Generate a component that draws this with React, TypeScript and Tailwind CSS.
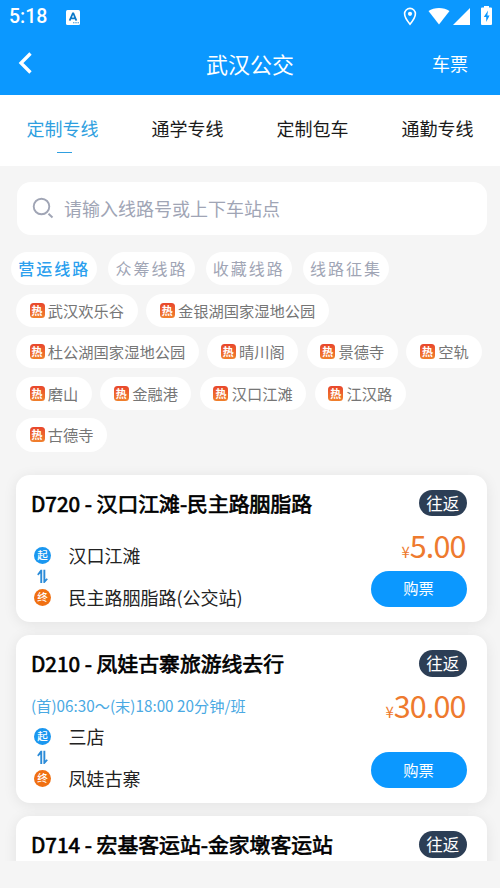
import clsx from "clsx";

const tabs = ["定制专线", "通学专线", "定制包车", "通勤专线"];
const filters = ["营运线路", "众筹线路", "收藏线路", "线路征集"];

const hotRows = [
  ["武汉欢乐谷", "金银湖国家湿地公园"],
  ["杜公湖国家湿地公园", "晴川阁", "景德寺", "空轨"],
  ["磨山", "金融港", "汉口江滩", "江汉路"],
  ["古德寺"],
];

type Trip = { time?: string; from: string; to: string; price: string };
type Line = { title: string; trip?: Trip };

const lines: Line[] = [
  { title: "D720 - 汉口江滩-民主路胭脂路", trip: { from: "汉口江滩", to: "民主路胭脂路(公交站)", price: "5.00" } },
  { title: "D210 - 凤娃古寨旅游线去行", trip: { time: "(首)06:30～(末)18:00 20分钟/班", from: "三店", to: "凤娃古寨", price: "30.00" } },
  { title: "D714 - 宏基客运站-金家墩客运站" },
];

function StatusBar() {
  return (
    <div className="flex h-[34px] items-center pl-[9px] pr-[8.5px] text-white">
      <span className="font-[Roboto] text-[19.5px] font-medium leading-none">5:18</span>
      <svg className="ml-[19px]" width="14" height="15" viewBox="0 0 14 15">
        <rect width="14" height="15" rx="1.5" fill="#fff" />
        <path d="M3.6 10.6 6.8 3.4h.6l3 7.2M4.8 8.4h4.600" fill="none" stroke="#0b78c8" strokeWidth="1.7" />
        <path d="M7.2 12.8h1.2M9.4 12.8h1.2M11.6 12.8h1.2" stroke="#0b78c8" strokeWidth="1.1" />
      </svg>
      <svg className="-mt-[2px] ml-auto" width="14" height="19" viewBox="0 0 14 19">
        <path d="M7 1.4a5.4 5.4 0 0 0-5.4 5.400C1.6 10.8 7 17.2 7 17.2s5.4-6.4 5.4-10.4A5.4 5.4 0 0 0 7 1.4Z" fill="none" stroke="#fff" strokeWidth="1.6" />
        <circle cx="7" cy="6.8" r="2.1" fill="#fff" />
      </svg>
      <svg className="-mt-[2px] ml-[11px]" width="22" height="18" viewBox="0 0 22 18">
        <path d="M.5 4C6 0 16 0 21.5 4L11 17.5Z" fill="#fff" />
      </svg>
      <svg className="-mt-[1px] ml-[3px]" width="17" height="17" viewBox="0 0 17 17">
        <path d="M17 0v17H0Z" fill="#fff" />
      </svg>
      <svg className="-mt-[3px] ml-[10.5px]" width="11" height="19" viewBox="0 0 11 19">
        <path d="M3 0h5v1.5h2a1 1 0 0 1 1 1V18a1 1 0 0 1-1 1H1a1 1 0 0 1-1-1V2.5a1 1 0 0 1 1-1h2Z" fill="#fff" />
        <path d="M7 4.5 2.8 11h2.4v5L8.6 9.5H6.3Z" fill="#0b98ff" />
      </svg>
    </div>
  );
}

function HotTag({ name }: { name: string }) {
  return (
    <div className="flex h-[33.4px] shrink-0 items-center rounded-full bg-white pl-[13.5px] pr-[13.4px]">
      <span className="flex size-[15px] items-center justify-center rounded-[3.5px] bg-linear-to-b from-[#e8452c] to-[#f0802c] text-[11px] font-bold leading-none text-white">热</span>
      <span className="ml-[3.3px] text-[15.28px] leading-none text-[#767676]">{name}</span>
    </div>
  );
}

function Stop({ mark, name, color }: { mark: string; name: string; color: string }) {
  return (
    <div className="flex h-[18px] items-center">
      <span className={clsx("flex size-[17px] items-center justify-center rounded-full text-[10.5px] font-medium leading-none text-white", color)}>{mark}</span>
      <span className="-mt-[1.5px] ml-[17.5px] text-[18px] leading-none text-[#222]">{name}</span>
    </div>
  );
}

function TripInfo({ trip }: { trip: Trip }) {
  return (
    <div className="flex flex-1 justify-between">
      <div className="flex flex-col pl-[3px]">
        {trip.time ? (
          <div className="-ml-[3px] mt-[20px] mb-[14.5px] h-[16px] text-[15.25px] leading-[16px] text-[#4aa9e3]">{trip.time}</div>
        ) : (
          <div className="h-[30px]" />
        )}
        <Stop mark="起" name={trip.from} color="bg-[#1a97f0]" />
        <svg className="my-[4.5px] ml-[3px]" width="12" height="15" viewBox="0 0 12 15">
          <path d="M.2 5.2 3.6.8H5.2V14H3.3V4.4L1.2 6.6ZM6.4.8H8.3V10.6L9.6 9.2 10.9 10.3 7.6 14H6.4Z" fill="#2b8bd8" />
        </svg>
        <Stop mark="终" name={trip.to} color="bg-[#f07012]" />
      </div>
      <div className="flex flex-col items-end">
        <div className="mr-[1px] mt-[12px] flex h-[32px] items-baseline leading-[32px] text-[#ee7a2e]">
          <span className="text-[15px]">¥</span>
          <span className="text-[30.5px] tracking-[-0.9px]">{trip.price}</span>
        </div>
        <button className={clsx("flex h-[36px] w-[96px] items-center justify-center rounded-full bg-[#0b98ff] pb-[1px] text-[15.3px] leading-none text-white", trip.time ? "mt-[31px]" : "mt-[10px]")}>购票</button>
      </div>
    </div>
  );
}

function LineCard({ line }: { line: Line }) {
  return (
    <div className={clsx("flex w-[471px] shrink-0 flex-col rounded-[14px] bg-white pl-[15.5px] pr-[20px] shadow-[0_2px_14px_rgba(0,0,0,0.08)]", line.trip?.time || !line.trip ? "h-[168.5px]" : "h-[147.5px]")}>
      <div className="mt-[15px] flex h-[27px] items-center justify-between">
        <h2 className="text-[20.83px] font-normal leading-none text-black [-webkit-text-stroke:0.7px_#000]">{line.title}</h2>
        <span className="flex h-[26.5px] w-[47.5px] items-center justify-center rounded-full bg-[#2c3e55] text-[16.5px] leading-none text-white">往返</span>
      </div>
      {line.trip && <TripInfo trip={line.trip} />}
    </div>
  );
}

export default function App() {
  return (
    <div className="h-[888px] w-[500px] overflow-hidden bg-[#f5f5f5] font-['Noto_Sans_CJK_SC',sans-serif]">
      <header className="h-[94.5px] bg-[#0b98ff]">
        <StatusBar />
        <div className="grid h-[58px] grid-cols-3 items-center text-white">
          <svg className="ml-[18px]" width="15" height="22" viewBox="0 0 15 22">
            <path d="M12.5 1.5 3 11l9.5 9.5" fill="none" stroke="#fff" strokeWidth="3.3" />
          </svg>
          <h1 className="text-center text-[22px] leading-none">武汉公交</h1>
          <span className="pr-[32px] text-right text-[18px] leading-none">车票</span>
        </div>
      </header>

      <nav className="grid h-[71px] grid-cols-4 bg-white">
        {tabs.map((t, i) => (
          <div key={t} className={clsx("flex flex-col items-center pt-[24px] text-[18px] leading-[18px]", i === 0 ? "text-[#2f9fe0]" : "text-[#1a1a1a]")}>
            {t}
            {i === 0 && <span className="ml-[4px] mt-[15px] h-px w-[15px] bg-[#2f9fe0]" />}
          </div>
        ))}
      </nav>

      <main className="flex h-[695px] flex-col overflow-hidden pl-[16px]">
        <div className="mt-[16px] ml-[0.5px] flex h-[53px] w-[470px] shrink-0 items-center rounded-[14px] bg-white pl-[15.5px]">
          <svg width="22" height="22" viewBox="0 0 22 22">
            <circle cx="9.5" cy="9.5" r="7.8" fill="none" stroke="#a0a5b5" strokeWidth="1.9" />
            <path d="m16.5 16.8 4 3.700" stroke="#a0a5b5" strokeWidth="2" />
          </svg>
          <span className="ml-[10px] text-[18px] leading-none text-[#a0a5b5]">请输入线路号或上下车站点</span>
        </div>

        {/* line filters */}
        <div className="-ml-[5px] mt-[17px] flex shrink-0 gap-[11px]">
          {filters.map((f, i) => (
            <div key={f} className={clsx("flex h-[33px] w-[86.3px] items-center justify-center rounded-full bg-white text-[16px] leading-none tracking-[2px]", i === 0 ? "font-medium text-[#2b9fee]" : "text-[#a0a5b5]")}>{f}</div>
          ))}
        </div>

        {/* hot destinations */}
        <div className="mt-[9px] flex shrink-0 flex-col gap-[8.2px]">
          {hotRows.map((row) => (
            <div key={row[0]} className="flex gap-[8.6px]">
              {row.map((name) => <HotTag key={name} name={name} />)}
            </div>
          ))}
        </div>

        <div className="-ml-[0.5px] mt-[23px] flex flex-col gap-[12.7px]">
          {lines.map((line) => <LineCard key={line.title} line={line} />)}
        </div>
      </main>
    </div>
  );
}
